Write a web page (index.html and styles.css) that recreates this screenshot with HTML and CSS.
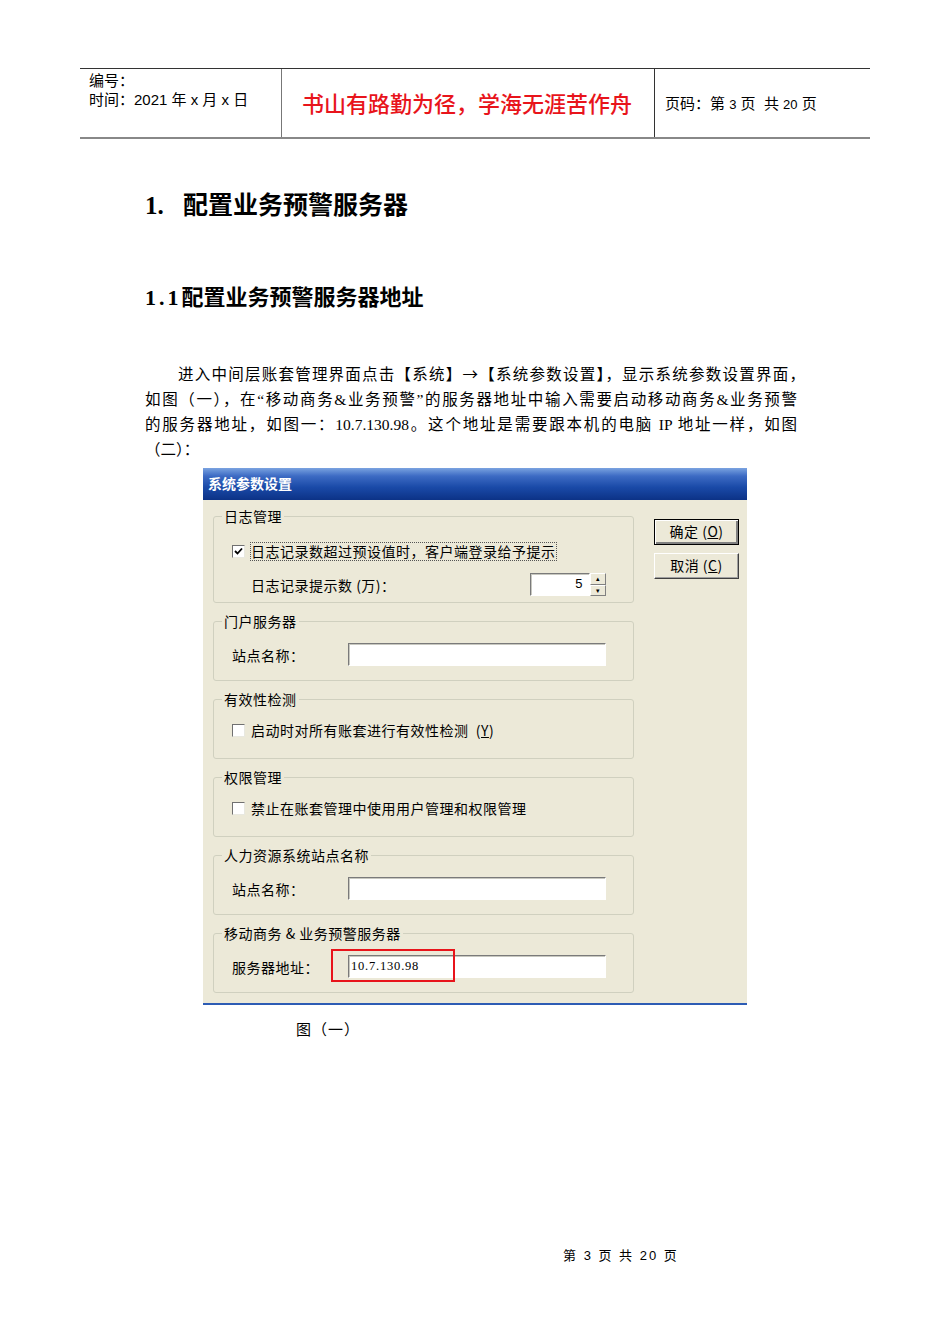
FILE: index.html
```html
<!DOCTYPE html>
<html lang="zh-CN">
<head>
<meta charset="UTF-8">
<title>配置业务预警服务器</title>
<link rel="stylesheet" href="styles.css">
</head>
<body>

<div class="page">

  <div class="doc-header">
    <div class="hd-left">
      <div>编号：</div>
      <div>时间：2021 年 x 月 x 日</div>
    </div>
    <div class="hd-motto">书山有路勤为径，学海无涯苦作舟</div>
    <div class="hd-right">页码：第 <span class="num">3</span> 页&nbsp; 共 <span class="num">20</span> 页</div>
  </div>

  <div class="content">
    <h1><span class="secnum">1.</span>配置业务预警服务器</h1>
    <h2><span class="secnum">1.1</span>配置业务预警服务器地址</h2>

    <p class="para">
      <span class="line first">进入中间层账套管理界面点击【系统】<span class="arrow">→</span>【系统参数设置】，显示系统参数设置界面，</span>
      <span class="line">如图（一），在“移动商务&amp;业务预警”的服务器地址中输入需要启动移动商务&amp;业务预警</span>
      <span class="line">的服务器地址，如图一：10.7.130.98。这个地址是需要跟本机的电脑 IP 地址一样，如图</span>
      <span class="line last">（二）：</span>
    </p>

    <div class="dialog">
      <div class="titlebar">系统参数设置</div>
      <div class="dlg-body">
        <div class="groups">

          <fieldset class="grp grp-log">
            <legend>日志管理</legend>
            <div class="chk-row">
              <span class="chk"><svg width="9" height="9" viewBox="0 0 9 9"><path d="M1 4 L3.5 6.5 L8 1.5" fill="none" stroke="#000" stroke-width="1.8"/></svg></span>
              <span class="focus">日志记录数超过预设值时，客户端登录给予提示</span>
            </div>
            <div class="spin-row">
              <span>日志记录提示数 (万)：</span>
              <span class="spin">
                <span class="field spin-field">5</span>
                <span class="spin-btns">
                  <span class="sb">▴</span>
                  <span class="sb">▾</span>
                </span>
              </span>
            </div>
          </fieldset>

          <fieldset class="grp grp-field">
            <legend>门户服务器</legend>
            <div class="field-row">
              <span class="lbl">站点名称：</span>
              <span class="field wide"></span>
            </div>
          </fieldset>

          <fieldset class="grp grp-chk">
            <legend>有效性检测</legend>
            <div class="chk-row">
              <span class="chk"></span>
              <span>启动时对所有账套进行有效性检测&nbsp; (<u>Y</u>)</span>
            </div>
          </fieldset>

          <fieldset class="grp grp-chk">
            <legend>权限管理</legend>
            <div class="chk-row">
              <span class="chk"></span>
              <span>禁止在账套管理中使用用户管理和权限管理</span>
            </div>
          </fieldset>

          <fieldset class="grp grp-field">
            <legend>人力资源系统站点名称</legend>
            <div class="field-row">
              <span class="lbl">站点名称：</span>
              <span class="field wide"></span>
            </div>
          </fieldset>

          <fieldset class="grp grp-field">
            <legend>移动商务 &amp; 业务预警服务器</legend>
            <div class="field-row">
              <span class="lbl">服务器地址：</span>
              <span class="field wide ip">10.7.130.98<span class="mark"></span></span>
            </div>
          </fieldset>

        </div>
        <div class="buttons">
          <div class="btn default">确定 (<u>O</u>)</div>
          <div class="btn">取消 (<u>C</u>)</div>
        </div>
      </div>
    </div>

    <div class="caption">图（一）</div>
  </div>

  <div class="footer">第 <span class="num">3</span> 页 共 <span class="num">20</span> 页</div>

</div>

</body>
</html>
```

FILE: styles.css
```css
body {
  margin: 0;
  background: #fff;
  color: #000;
  font-family: "Liberation Serif", "Noto Sans CJK SC", serif;
}
.page {
  width: 950px;
  height: 1344px;
  padding-top: 68px;
  box-sizing: border-box;
}

/* header table */
.doc-header {
  margin: 0 80px;
  display: flex;
  height: 68px;
  border-top: 1px solid #333;
  border-bottom: 2px solid #888;
  font-family: "Liberation Sans", "Noto Sans CJK SC", sans-serif;
}
.hd-left {
  width: 202px;
  padding: 2px 0 0 9px;
  box-sizing: border-box;
  border-right: 1px solid #777;
  font-size: 15px;
  line-height: 19px;
}
.hd-motto {
  width: 373px;
  padding: 20px 0 0 20px;
  box-sizing: border-box;
  border-right: 1px solid #333;
  color: #e8141b;
  font-size: 22px;
  line-height: 32px;
  font-weight: 500;
}
.hd-right {
  flex: 1;
  padding: 24px 0 0 10px;
  font-size: 15px;
  line-height: 22px;
}
.num {
  font-size: 13px;
}

.content {
  padding-left: 145px;
}
h1 {
  margin: 51px 0 0;
  font-size: 25px;
  line-height: 32px;
  font-weight: bold;
}
h1 .secnum {
  display: inline-block;
  width: 38px;
}
h2 {
  margin: 62px 0 0;
  font-size: 22px;
  line-height: 28px;
  font-weight: bold;
}
h2 .secnum {
  letter-spacing: 3px;
}
.para {
  margin: 49px 0 0;
  width: 662px;
  font-size: 15.5px;
  line-height: 25px;
}
.para .line {
  display: block;
  text-align: justify;
  text-align-last: justify;
}
.para .first {
  padding-left: 33px;
  width: 627px;
}
.para .line:nth-child(2),
.para .line:nth-child(3) {
  width: 652px;
}
.para .last {
  text-align-last: left;
}
.arrow {
  font-family: "Noto Sans CJK SC", sans-serif;
}

/* dialog */
.dialog {
  margin: 6px 0 0 58px;
  width: 544px;
  background: #ece9d8;
  border-bottom: 2px solid #2d5cb4;
  font-family: "Noto Sans CJK SC", sans-serif;
  font-size: 14px;
  letter-spacing: 0.5px;
}
.titlebar {
  height: 32px;
  line-height: 30px;
  padding-left: 5px;
  color: #fff;
  font-weight: bold;
  font-size: 14px;
  letter-spacing: 0;
  background: linear-gradient(#7aa3e0 0%, #3d6bc4 25%, #1a4aa8 60%, #0c3286 100%);
}
.dlg-body {
  display: flex;
  padding: 0 0 10px 10px;
}
.groups {
  width: 421px;
}
.grp {
  margin: 0;
  border: 1px solid #d0d0bf;
  border-radius: 3px;
  padding: 0 0 0 18px;
  min-width: 0;
}
.grp + .grp {
  margin-top: 10px;
}
.grp legend {
  padding: 0 2px;
  margin-left: -10px;
  line-height: 16px;
}
.grp-log {
  margin-top: 8px;
  padding-top: 17px;
  padding-bottom: 6px;
}
.grp-chk {
  padding-top: 13px;
  padding-bottom: 18px;
}
.grp-field {
  padding-top: 14px;
  padding-bottom: 14px;
}

.chk-row {
  display: flex;
  align-items: center;
  height: 20px;
  gap: 6px;
}
.chk {
  width: 11px;
  height: 11px;
  background: #fff;
  border: 1px solid #707070;
  border-right-color: #e8e8e0;
  border-bottom-color: #e8e8e0;
  display: flex;
  align-items: center;
  justify-content: center;
}
.focus {
  outline: 1px dotted #555;
  outline-offset: 0;
  line-height: 17px;
}
.spin-row {
  display: flex;
  align-items: center;
  justify-content: space-between;
  margin-top: 12px;
  padding-left: 19px;
  padding-right: 27px;
}
.spin {
  display: flex;
}
.field {
  display: block;
  height: 23px;
  box-sizing: border-box;
  background: #fff;
  border: 1px solid #fff;
  border-top-color: #7a7a7a;
  border-left-color: #7a7a7a;
  box-shadow: inset 1px 1px 0 #c8c8c0;
}
.spin-field {
  width: 60px;
  text-align: right;
  padding-right: 6px;
  line-height: 20px;
  font-family: "Liberation Sans", sans-serif;
  font-size: 13px;
}
.spin-btns {
  width: 16px;
  height: 23px;
  display: flex;
  flex-direction: column;
}
.sb {
  flex: 1;
  background: #ece9d8;
  border: 1px solid #fff;
  border-right-color: #808080;
  border-bottom-color: #808080;
  font-size: 7px;
  line-height: 9px;
  text-align: center;
  letter-spacing: 0;
}
.field-row {
  display: flex;
  align-items: center;
}
.lbl {
  width: 116px;
}
.wide {
  width: 258px;
  position: relative;
}
.ip {
  font-family: "Liberation Serif", serif;
  font-size: 12.5px;
  letter-spacing: 0.8px;
  line-height: 21px;
  padding-left: 2px;
}
.mark {
  position: absolute;
  left: -18px;
  top: -7px;
  width: 120px;
  height: 29px;
  border: 2px solid #e8141b;
}

.buttons {
  margin-left: 20px;
  padding-top: 19px;
}
.btn {
  width: 85px;
  height: 26px;
  box-sizing: border-box;
  border: 1px solid #fff;
  border-right-color: #404040;
  border-bottom-color: #404040;
  box-shadow: inset -1px -1px 0 #a0a0a0;
  text-align: center;
  line-height: 23px;
  margin-bottom: 8px;
}
.btn.default {
  border: 1px solid #000;
  box-shadow: inset 1px 1px 0 #fff, inset -2px -2px 0 #808080;
}

.caption {
  margin: 15px 0 0 151px;
  line-height: 20px;
  font-size: 15px;
  letter-spacing: 1px;
}
.footer {
  margin-top: 208px;
  padding-left: 563px;
  font-size: 13px;
  line-height: 16px;
  letter-spacing: 2px;
  font-family: "Liberation Sans", "Noto Sans CJK SC", sans-serif;
}
```
